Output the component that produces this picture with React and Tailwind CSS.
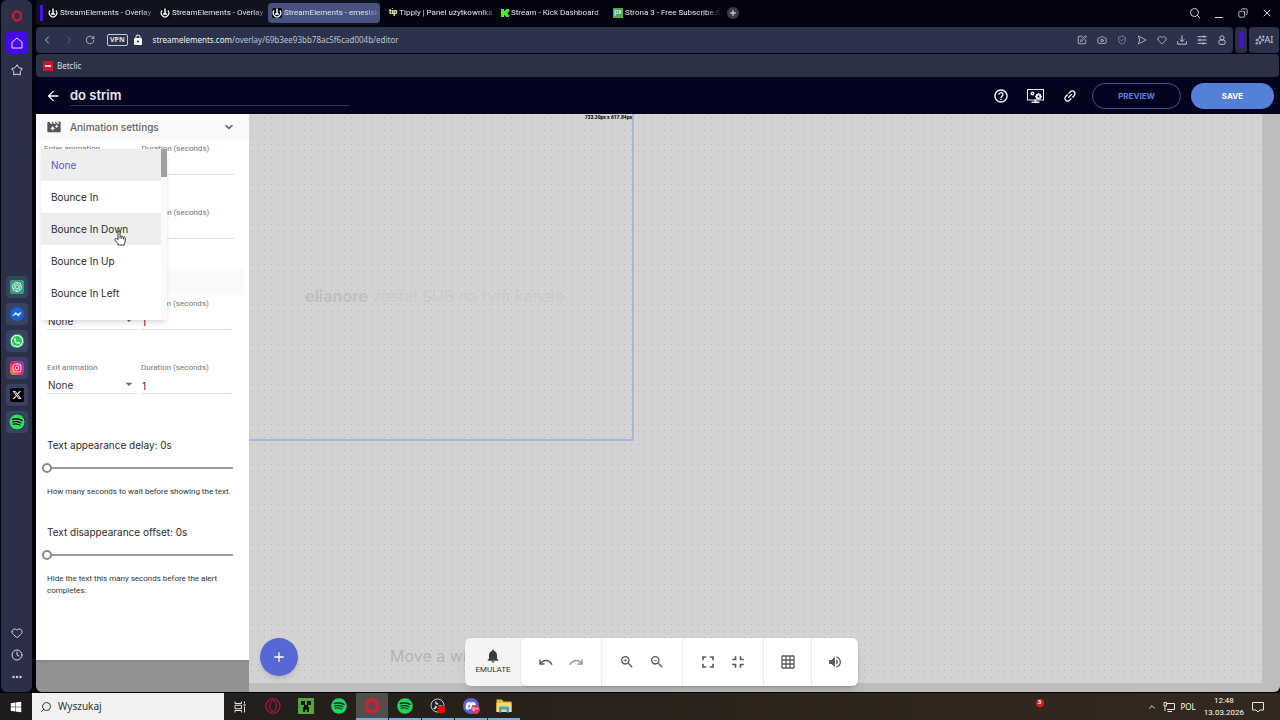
import { useState } from "react";
import clsx from "clsx";
import {
  MdMovieFilter,
  MdNotifications,
  MdHelpOutline,
  MdZoomIn,
  MdZoomOut,
  MdFullscreen,
  MdFullscreenExit,
  MdGridOn,
  MdVolumeUp,
  MdAdd,
  MdArrowBack,
  MdLink,
  MdLock,
  MdArrowDropDown,
} from "react-icons/md";
import { FaSpotify, FaXTwitter, FaInstagram, FaDiscord, FaWhatsapp, FaWindows } from "react-icons/fa6";
import { SiOpenai } from "react-icons/si";
import {
  Camera,
  ChevronDown,
  ChevronLeft,
  ChevronRight,
  ChevronUp,
  Clock,
  Copy,
  Ellipsis,
  Heart,
  RotateCw,
  Search,
  ShieldCheck,
  Sparkles,
  SquarePen,
  X,
} from "lucide-react";

const animations = ["None", "Bounce In", "Bounce In Down", "Bounce In Up", "Bounce In Left"];

const OperaLogo = ({ className }) => (
  <svg viewBox="0 0 24 24" className={className} fill="none" stroke="currentColor">
    <ellipse cx="12" cy="12" rx="10.500" ry="11" strokeWidth="2" />
    <ellipse cx="12" cy="12" rx="5" ry="8" strokeWidth="2" />
  </svg>
);

const OperaRed = ({ className }) => (
  <svg viewBox="0 0 24 24" className={className} fill="none" stroke="currentColor">
    <ellipse cx="12" cy="12" rx="8" ry="9" strokeWidth="5" />
  </svg>
);

const StreamElementsLogo = () => (
  <svg viewBox="0 0 20 20" className="size-2.5 shrink-0">
    <rect width="20" height="20" rx="3" fill="#05060c" />
    <path d="M4.500 5a7.500 7.500 0 1 0 11 0" fill="none" stroke="#fff" strokeWidth="2.4" />
    <path d="M10 1v12M6 12h8" stroke="#fff" strokeWidth="3" />
  </svg>
);

const KickLogo = () => (
  <svg viewBox="0 0 16 16" className="size-2 shrink-0" fill="#3df71c">
    <path d="M0 0h6v4h2V2h2V0h6v6h-2v2h-2v1h2v2h2v5h-6v-2H8v-2H6v4H0z" />
  </svg>
);

const MessengerLogo = () => (
  <svg viewBox="0 0 24 24" className="size-3.5">
    <circle cx="12" cy="12" r="12" fill="#1763dd" />
    <path d="M5 15.500 9.500 9l4 3.500L19 9l-4.500 6.500-4-3.500z" fill="#fff" stroke="#fff" />
  </svg>
);

const SendIcon = () => (
  <svg viewBox="0 0 24 24" className="size-2.5" fill="none" stroke="currentColor" strokeWidth="2">
    <path d="M3 2.500 22 12 3 21.500 6.500 12z" strokeLinejoin="round" />
  </svg>
);

const DownloadIcon = () => (
  <svg viewBox="0 0 24 24" className="size-2.5" fill="none" stroke="currentColor" strokeWidth="2.400">
    <path d="M12 1v15M6.500 10.500 12 16l5.500-5.500M1.500 15v7h21v-7" />
  </svg>
);

const SetupIcon = () => (
  <svg viewBox="0 0 24 24" className="size-2.5" fill="none" stroke="currentColor" strokeWidth="2.400">
    <path d="M1 4h22M1 12h22M1 20h22M17 1v6M7 9v6M15 17v6" />
  </svg>
);

const ProfileIcon = () => (
  <svg viewBox="0 0 24 24" className="size-2.5" fill="none" stroke="currentColor" strokeWidth="2.400">
    <circle cx="12" cy="7" r="5" />
    <rect x="4" y="12" width="16" height="10.500" rx="5" />
  </svg>
);

const MonitorGear = () => (
  <svg viewBox="0 0 34 28" className="h-3.5 w-[17px]" fill="none" stroke="#e9ebf5">
    <rect x="1" y="1" width="32" height="21" strokeWidth="2" />
    <path d="M9 26.500h16" strokeWidth="3" />
    <path d="M17 21v5" strokeWidth="4" />
    <circle cx="11" cy="9" r="2.500" strokeWidth="3" />
    <circle cx="23" cy="15" r="4" strokeWidth="4" />
    <path d="M23 8v14M16 15h14M18 10l10 10M28 10 18 20" strokeWidth="2" />
    <circle cx="23" cy="15" r="2" fill="#02041f" stroke="none" />
  </svg>
);

const Undo = ({ className }) => (
  <svg viewBox="0 0 28 20" className={clsx("h-2.5 w-3.5", className)} fill="none" stroke="currentColor" strokeWidth="3">
    <path d="M2 5v9h9" />
    <path d="M2.500 13.500C8 5.500 20 3.500 26 15.500" />
  </svg>
);

const TaskView = () => (
  <svg viewBox="0 0 24 24" className="size-3" fill="none" stroke="#e6e6e6" strokeWidth="2">
    <path d="M2 1v4h13V1M2 23v-4h13v4M2 8.500h13v7H2zM21 1v4M21 11v12" />
    <path d="M19 8h4" strokeWidth="3" />
  </svg>
);

const Creeper = () => (
  <svg viewBox="0 0 16 16" className="size-4">
    <path d="M0 0h16v16H0z" fill="#54a63a" />
    <path d="M3 3h4v4H3zM9 3h4v4H9zM6 7h4v2h1v5H9v-2H7v2H5V9h1z" fill="#0b170a" />
  </svg>
);

const Obs = () => (
  <svg viewBox="0 0 32 32" className="size-4">
    <circle cx="15" cy="15" r="13" fill="#222" stroke="#c8c8c8" strokeWidth="2" />
    <g fill="#d0d0d0">
      <path d="M15 14c-5-1-6-6-3-9-1 4 3 4 5 6z" />
      <path d="M17 16c4-4 9-1 9 3-3-3-5 0-8 0z" />
      <path d="M14 17c0 5-5 7-9 4 5 0 4-4 6-6z" />
    </g>
    <circle cx="23" cy="23" r="8" fill="#f00606" />
  </svg>
);

const Folder = () => (
  <svg viewBox="0 0 32 28" className="h-3.5 w-4">
    <path d="M1 1h11l3 4h16v21H1z" fill="#e9b83a" />
    <path d="M1 8h30v18H1z" fill="#fbd968" />
    <path d="M6 27V15h20v12h-5v-6H11v6z" fill="#4ba3c9" />
  </svg>
);

const Cursor = () => (
  <svg viewBox="0 0 24 32" className="pointer-events-none absolute top-[116px] left-[78px] z-20 h-4 w-3">
    <path
      d="M8 19V4c0-3 4-3 4 0v9c1-1 3-1 3.500.5 1-1 3-.5 3.500 1 1-1 3.500-.5 3.500 2V22c0 3-2 4-2 8H9c0-3-7-8-7.500-11 0-2 3-3 4.500-1z"
      fill="#fff"
      stroke="#222"
      strokeWidth="1.800"
    />
    <path d="M12 13v5M15.500 14v4M19 15v4" stroke="#222" strokeWidth="1.500" />
  </svg>
);

function Tab({ icon, title, active }) {
  return (
    <button
      className={clsx(
        "flex h-5 w-28 items-center gap-0.5 rounded-sm pl-1 text-left whitespace-nowrap text-[#e4e6ee]",
        active && "bg-[#46527f]"
      )}
    >
      {icon}
      <span className="flex-1 mask-r-from-85%">{title}</span>
    </button>
  );
}

function OperaSidebar() {
  const apps = [
    { name: "ChatGPT", icon: <SiOpenai className="size-3.5 rounded-xs bg-[#35a07c] p-0.5 text-white" /> },
    { name: "Messenger", icon: <MessengerLogo /> },
    { name: "WhatsApp", icon: <FaWhatsapp className="size-3.5 rounded-full bg-[#2bc75c] text-white" /> },
    {
      name: "Instagram",
      icon: (
        <FaInstagram className="size-3.5 rounded-sm bg-linear-to-tr from-[#ff8a1c] via-[#f0106a] to-[#8c1fd0] p-0.5 text-white" />
      ),
    },
    { name: "X", icon: <FaXTwitter className="size-3.5 rounded-xs bg-black p-0.5 text-white" /> },
    { name: "Spotify", icon: <FaSpotify className="size-4 rounded-full bg-black text-[#2fdc68]" /> },
  ];

  return (
    <nav className="ml-px flex w-[31px] shrink-0 flex-col items-center rounded-md bg-[#2a3048] text-[#d5d9e8]">
      <button aria-label="Opera" className="mt-2.5">
        <OperaRed className="size-3 text-[#d01433]" />
      </button>
      <button aria-label="Home" className="mt-2.5 flex size-[22px] items-center justify-center rounded-sm bg-[#4609ee]">
        <svg viewBox="0 0 24 24" className="size-3" fill="none" stroke="#e9e6ff" strokeWidth="2">
          <path d="M2 10.500 12 2l10 8.500V22H2z" strokeLinejoin="round" />
        </svg>
      </button>
      <button aria-label="Bookmarks" className="mt-2.5">
        <svg viewBox="0 0 24 24" className="size-3" fill="none" stroke="currentColor" strokeWidth="2">
          <path d="m12 1.500 4 6 6.500 2-4 5.500v7L12 20l-6.500 2v-7l-4-5.500L8 7.500z" strokeLinejoin="round" />
        </svg>
      </button>

      <div className="mt-50 flex flex-col gap-[5px]">
        {apps.map((a) => (
          <button key={a.name} aria-label={a.name} className="flex size-[22px] items-center justify-center rounded-sm bg-[#3a4263]">
            {a.icon}
          </button>
        ))}
      </div>

      <div className="mt-auto mb-[9px] flex flex-col items-center gap-2.5">
        <button aria-label="Favourites"><Heart className="size-3" /></button>
        <button aria-label="History"><Clock className="size-3" /></button>
        <button aria-label="More"><Ellipsis className="size-3" strokeWidth={3} /></button>
      </div>
    </nav>
  );
}

function BrowserChrome() {
  return (
    <div className="font-['Noto_Sans','Liberation_Sans',sans-serif] text-[8px]">
      <div className="flex h-[27px] items-center pb-0.5 font-['Roboto','Liberation_Sans',sans-serif]">
        <div className="flex h-full items-center rounded-sm bg-[#10121f] pl-1">
          <div className="mr-px h-4 w-[3px] bg-[#4c13e8]" />
          <Tab icon={<StreamElementsLogo />} title="StreamElements - Overlay" />
          <Tab icon={<StreamElementsLogo />} title="StreamElements - Overlay" />
          <Tab icon={<StreamElementsLogo />} title="StreamElements - emesisk" active />
        </div>
        <div className="ml-[5px] flex items-center">
          <Tab icon={<span className="text-[7px] font-extrabold text-white">tip</span>} title="Tipply | Panel użytkownika" />
          <Tab icon={<KickLogo />} title="Stream - Kick Dashboard" />
          <Tab
            icon={<span className="flex size-2.5 items-center justify-center bg-[#4caa4e] text-[7px] text-white">px</span>}
            title="Strona 3 - Free Subscribe S"
          />
        </div>
        <button aria-label="New tab" className="ml-1.5 flex size-3 items-center justify-center rounded-full bg-[#3a3c48] text-white">
          <MdAdd className="size-2.5" />
        </button>
        <div className="mr-[7px] ml-auto flex items-center gap-3 text-[#d4d6de]">
          <button aria-label="Search tabs"><Search className="size-3" /></button>
          <button aria-label="Minimise">
            <svg viewBox="0 0 12 12" className="size-3" stroke="currentColor">
              <path d="M2 10.500h8" />
            </svg>
          </button>
          <button aria-label="Restore"><Copy className="size-3 rotate-90 p-px" /></button>
          <button aria-label="Close"><X className="size-3" /></button>
        </div>
      </div>

      <div className="flex h-[26px] gap-0.5">
        <div className="flex flex-1 items-center rounded-sm bg-[#2c324b] px-[5px] text-[#bfc3d2]">
          <button aria-label="Back"><ChevronLeft className="size-3" /></button>
          <button aria-label="Forward" className="ml-2.5 text-[#5b617a]"><ChevronRight className="size-3" /></button>
          <button aria-label="Reload" className="ml-2.5"><RotateCw className="size-2.5" /></button>
          <button className="ml-3 h-3 rounded-xs border border-[#c6c9d6] px-0.5 text-[7px] leading-[10px] font-bold text-[#dfe1ea]">VPN</button>
          <MdLock className="ml-1 size-3 text-white" />
          <p className="ml-[9px] flex-1">
            <span className="text-[#f0f1f6]">streamelements.com</span>/overlay/69b3ee93bb78ac5f6cad004b/editor
          </p>
          <div className="mr-px flex items-center gap-2.5">
            <button aria-label="Edit page"><SquarePen className="size-2.5" /></button>
            <button aria-label="Snapshot"><Camera className="size-2.5" /></button>
            <button aria-label="Privacy" className="text-[#8d92a8]"><ShieldCheck className="size-2.5" /></button>
            <button aria-label="Send"><SendIcon /></button>
            <button aria-label="Favourite"><Heart className="size-2.5" /></button>
            <button aria-label="Downloads"><DownloadIcon /></button>
            <button aria-label="Easy setup"><SetupIcon /></button>
            <button aria-label="Profile"><ProfileIcon /></button>
          </div>
        </div>
        <div className="flex w-3 items-center justify-center rounded-sm bg-[#2c2c4b]">
          <div className="h-4 w-[5px] rounded-xs bg-[#4214d4]" />
        </div>
        <button className="mr-px flex w-[30px] items-center justify-center rounded-sm bg-[#2c324b] text-[9px] text-[#cfd2de]">
          <Sparkles className="size-2.5" />
          AI
        </button>
      </div>

      <div className="mt-px mr-px flex h-[23px] items-center rounded-sm bg-[#2c3246] px-[7px]">
        <a href="#betclic" className="flex items-center gap-1 text-[#dcdee6]">
          <span className="flex size-2.5 items-center justify-center bg-[#d3122d]">
            <span className="h-0.5 w-1.5 bg-white/80" />
          </span>
          Betclic
        </a>
      </div>
    </div>
  );
}

function EditorHeader() {
  return (
    <header className="flex h-[37px] items-center bg-[#02041f] pr-1.5 pl-[9px] text-white">
      <button aria-label="Back to overlays"><MdArrowBack className="size-4" /></button>
      <input
        aria-label="Overlay name"
        defaultValue="do strim"
        className="ml-[9px] h-5 w-[279px] border-b border-[#2c3358] bg-transparent text-[13px] font-semibold text-[#e8eaf3] outline-none"
      />
      <div className="ml-auto flex items-center gap-[18px]">
        <button aria-label="Help"><MdHelpOutline className="size-4" /></button>
        <button aria-label="Overlay settings"><MonitorGear /></button>
        <button aria-label="Copy link"><MdLink className="size-4 -rotate-45" /></button>
      </div>
      <button className="ml-3.5 h-[26px] w-[89px] rounded-full border border-[#46528f] text-[8px] font-bold text-[#5583e2]">PREVIEW</button>
      <button className="ml-2.5 h-[26px] w-[83px] rounded-full bg-[#5580da] text-[8px] font-bold text-white">SAVE</button>
    </header>
  );
}

function AnimationRow({ id, label }) {
  const labelStyle = "block h-3 font-['Roboto','Liberation_Sans',sans-serif] text-[8px] leading-3 text-[#757575]";
  const control = "block h-5 w-full appearance-none border-b border-[#e0e0e0] bg-transparent px-px pt-1 text-[10px] outline-none";
  return (
    <div className="grid grid-cols-2 gap-1 text-[#333]">
      <div>
        <label htmlFor={id} className={labelStyle}>{label}</label>
        <div className="relative">
          <select id={id} className={control}>
            <option>None</option>
          </select>
          <MdArrowDropDown className="pointer-events-none absolute top-0.5 right-0 size-4 text-[#666]" />
        </div>
      </div>
      <div>
        <label htmlFor={`${id}-duration`} className={labelStyle}>Duration (seconds)</label>
        <input id={`${id}-duration`} defaultValue="1" className={control} />
      </div>
    </div>
  );
}

function DelaySlider({ id, title, hint }) {
  const [value, setValue] = useState(0);

  return (
    <div className="flex flex-col">
      <label htmlFor={id} className="text-[10px] leading-4 text-[#2b2b2b]">{title}: {value}s</label>
      <input
        id={id}
        type="range"
        min="0"
        max="20"
        value={value}
        onChange={(e) => setValue(Number(e.target.value))}
        className="mt-2.5 -ml-[5px] h-2.5 appearance-none bg-transparent [&::-webkit-slider-runnable-track]:h-0.5 [&::-webkit-slider-runnable-track]:bg-[#9b9d9b] [&::-webkit-slider-thumb]:-mt-1 [&::-webkit-slider-thumb]:size-2.5 [&::-webkit-slider-thumb]:appearance-none [&::-webkit-slider-thumb]:rounded-full [&::-webkit-slider-thumb]:border-2 [&::-webkit-slider-thumb]:border-[#8a8c8a] [&::-webkit-slider-thumb]:bg-white"
      />
      <p className="mt-[13px] font-['Roboto','Liberation_Sans',sans-serif] text-[8px] leading-3 text-[#333]">{hint}</p>
    </div>
  );
}

function SettingsPanel() {
  const [selected, setSelected] = useState("None");

  return (
    <aside className="relative flex w-[213px] shrink-0 flex-col bg-[#929292]">
      <div className="mb-8 flex-1 bg-white shadow">
        <button className="flex h-[26px] w-full items-center bg-[#fafafa] px-2.5 text-[10px] font-medium text-[#666]">
          <MdMovieFilter className="size-4 text-[#555]" />
          <span className="ml-2">Animation settings</span>
          <ChevronDown className="mr-1 ml-auto size-3 text-[#4a5fc4]" strokeWidth={3} />
        </button>
        <div className="mt-[3px]">
          <div className="flex flex-col gap-8 pr-3.5 pl-2">
            <AnimationRow id="widget-enter" label="Enter animation" />
            <AnimationRow id="widget-exit" label="Exit animation" />
          </div>
          <button aria-label="Text animation settings" className="mt-[30px] block h-[26px] w-52 bg-[#fafafa]" />
          <div className="mt-[3px] flex flex-col gap-8 pr-[18px] pl-[11px]">
            <AnimationRow id="text-enter" label="Enter animation" />
            <AnimationRow id="text-exit" label="Exit animation" />
          </div>
          <div className="mt-[43px] flex flex-col gap-[26px] pr-4 pl-[11px]">
            <DelaySlider id="delay" title="Text appearance delay" hint="How many seconds to wait before showing the text." />
            <DelaySlider id="offset" title="Text disappearance offset" hint="Hide the text this many seconds before the alert completes." />
          </div>
        </div>
      </div>

      {/* open "Enter animation" menu */}
      <div className="absolute top-[35px] left-[5px] z-10 flex h-[171px] w-[126px] overflow-hidden bg-white shadow-md">
        <ul role="listbox" aria-label="Enter animation" className="flex-1">
          {animations.map((name) => (
            <li key={name} role="option" aria-selected={name === selected}>
              <button
                onClick={() => setSelected(name)}
                className={clsx(
                  "h-8 w-full px-2.5 text-left text-[10px] whitespace-nowrap",
                  name === selected ? "bg-[#eee] text-[#4b5cc4]" : "text-[#2b2b2b]",
                  name === "Bounce In Down" && "bg-[#eee]"
                )}
              >
                {name}
              </button>
            </li>
          ))}
        </ul>
        <div className="w-1.5 bg-[#fafafa]">
          <div className="h-7 bg-[#a0a0a0]" />
        </div>
      </div>
      <Cursor />
    </aside>
  );
}

function Toolbar() {
  const btn = "flex size-5 items-center justify-center";
  return (
    <div className="absolute bottom-1.5 left-[216px] flex h-12 rounded-md bg-[#f4f4f4] text-[#5c5c5c] shadow-lg">
      <button className="flex w-14 flex-col items-center justify-center font-['Roboto','Liberation_Sans',sans-serif] text-[8px] text-[#333]">
        <MdNotifications className="size-4 text-[#3c3c3c]" />
        <span className="leading-3">EMULATE</span>
      </button>
      <div className="flex divide-x divide-[#ececec] rounded-md bg-white shadow">
        <div className="flex w-[81px] items-center justify-center gap-2.5">
          <button aria-label="Undo" className={btn}><Undo /></button>
          <button aria-label="Redo" className={btn}><Undo className="-scale-x-100 text-[#9a9a9a]" /></button>
        </div>
        <div className="flex w-[81px] items-center justify-center gap-2.5">
          <button aria-label="Zoom in" className={btn}><MdZoomIn className="size-4" /></button>
          <button aria-label="Zoom out" className={btn}><MdZoomOut className="size-4" /></button>
        </div>
        <div className="flex w-[81px] items-center justify-center gap-2.5">
          <button aria-label="Fullscreen" className={btn}><MdFullscreen className="size-5" /></button>
          <button aria-label="Exit fullscreen" className={btn}><MdFullscreenExit className="size-5" /></button>
        </div>
        <div className="flex w-12 items-center justify-center">
          <button aria-label="Grid" className={btn}><MdGridOn className="size-4" /></button>
        </div>
        <div className="flex w-[46px] items-center justify-center">
          <button aria-label="Sound" className={btn}><MdVolumeUp className="size-4" /></button>
        </div>
      </div>
    </div>
  );
}

function Canvas() {
  return (
    <main className="relative flex-1 overflow-hidden bg-[#bebebe] pr-[18px] pb-[9px]">
      <div className="relative h-full bg-[#d3d3d3]">
        <svg className="block h-full w-full">
          <defs>
            <pattern id="dots" width="20" height="20" patternUnits="userSpaceOnUse">
              <path
                d="M2 3h1v1H2zM9 3h1v1H9zM15 3h1v1h-1zM2 10h1v1H2zM9 10h1v1H9zM15 10h1v1h-1zM2 16h1v1H2zM9 16h1v1H9zM15 16h1v1h-1z"
                fill="#b4b4b4"
              />
            </pattern>
          </defs>
          <rect width="100%" height="100%" fill="url(#dots)" />
        </svg>
        <div className="absolute top-0 left-0 h-[327px] w-[385px] border-r-2 border-b-2 border-[#a9b6dc]">
          <p className="text-right font-['Roboto','Liberation_Sans',sans-serif] text-[5px] leading-[7px] font-bold text-black">733.20px x 617.84px</p>
          <p className="absolute top-[170px] left-14 text-base whitespace-nowrap text-[#cacaca]">
            <b className="text-[#bfbfbf]">elianore</b> został SUB na tym kanale
          </p>
        </div>
        <p className="absolute bottom-[15px] left-[141px] text-base text-[#b3b3b3]">Move a widget</p>
      </div>
      <button
        aria-label="Add widget"
        className="absolute bottom-4 left-[11px] flex size-[38px] items-center justify-center rounded-full bg-[#5767d6] text-white shadow-md"
      >
        <MdAdd className="size-4" />
      </button>
      <Toolbar />
    </main>
  );
}

function Taskbar() {
  const apps = [
    { name: "Opera", icon: <OperaLogo className="size-4 text-[#a3173c]" /> },
    { name: "Minecraft", icon: <Creeper /> },
    { name: "Spotify", icon: <FaSpotify className="size-4 text-[#1ed760]" /> },
    { name: "Opera GX", active: true, open: true, icon: <OperaRed className="size-4 text-[#dc1a34]" /> },
    { name: "Spotify player", open: true, icon: <FaSpotify className="size-4 text-[#1ed760]" /> },
    { name: "OBS", open: true, icon: <Obs /> },
    {
      name: "Discord",
      open: true,
      icon: (
        <span className="relative">
          <FaDiscord className="size-4 rounded-full bg-[#5a5fe0] p-0.5 text-white" />
          <span className="absolute top-[7px] left-2 rounded-full bg-[#d83a52] px-px text-[6px] leading-[9px] text-white">9+</span>
        </span>
      ),
    },
    { name: "Files", open: true, icon: <Folder /> },
  ];

  return (
    <footer className="flex h-[27px] shrink-0 bg-linear-to-r from-[#1c1c1c] via-[#2b221b] to-[#33291f] font-['Noto_Sans','Liberation_Sans',sans-serif] text-white">
      <button aria-label="Start" className="flex w-8 items-center justify-center"><FaWindows className="size-3" /></button>
      <label className="flex w-48 items-center gap-1.5 bg-[#f1f1f1] pl-2 text-[#333]">
        <Search className="size-3 -scale-x-100" />
        <input aria-label="Wyszukaj" placeholder="Wyszukaj" className="w-32 bg-transparent text-[10px] outline-none placeholder:text-[#333]" />
      </label>
      <button aria-label="Task view" className="flex w-8 items-center justify-center"><TaskView /></button>
      <div className="ml-px flex gap-px">
        {apps.map((a) => (
          <button
            key={a.name}
            aria-label={a.name}
            className={clsx(
              "flex w-8 items-center justify-center border-b-2",
              a.active && "bg-[#514e4c]",
              a.open ? "border-[#6fb2e0]" : "border-transparent"
            )}
          >
            {a.icon}
          </button>
        ))}
      </div>
      <div className="ml-auto flex items-center">
        <span className="mr-[103px] mb-2 flex size-2 items-center justify-center rounded-full bg-[#d0252b] text-[6px] font-bold">3</span>
        <button aria-label="Hidden icons"><ChevronUp className="size-2.5" /></button>
        <svg viewBox="0 0 24 20" className="ml-1.5 h-2.5 w-3" fill="none" stroke="#e6e6e6" strokeWidth="2">
          <path d="M7 3h16v12H8M2 1h5v7H2zM4 8v10M9 19h9" />
        </svg>
        <span className="ml-1.5 text-[8px]">POL</span>
        <div className="ml-2 text-center font-['Roboto','Liberation_Sans',sans-serif] text-[8px] leading-3">
          <p>12:48</p>
          <p>13.03.2026</p>
        </div>
        <button aria-label="Notifications" className="mr-4 ml-2">
          <svg viewBox="0 0 24 24" className="size-3" fill="none" stroke="#e6e6e6" strokeWidth="2">
            <path d="M1 3h22v15h-7l-4 4-4-4H1z" />
          </svg>
        </button>
      </div>
    </footer>
  );
}

export default function App() {
  return (
    <div className="flex h-screen flex-col bg-[#02030f] font-['Inter','Liberation_Sans',sans-serif]">
      <div className="flex min-h-0 flex-1 pb-px">
        <OperaSidebar />
        <div className="ml-1 flex min-w-0 flex-1 flex-col">
          <BrowserChrome />
          <EditorHeader />
          <div className="flex min-h-0 flex-1 overflow-hidden rounded-b-md">
            <SettingsPanel />
            <Canvas />
          </div>
        </div>
      </div>
      <Taskbar />
    </div>
  );
}
